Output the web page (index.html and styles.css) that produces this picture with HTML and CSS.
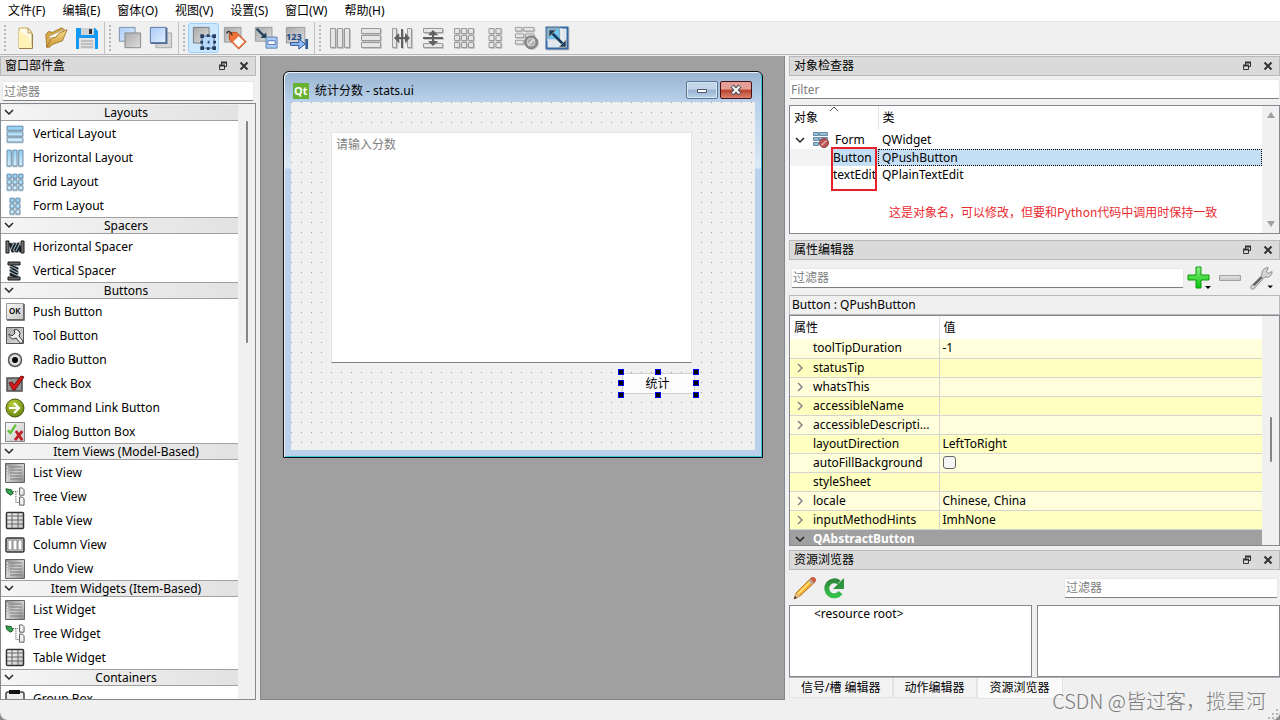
FILE: index.html
```html
<!DOCTYPE html>
<html lang="zh-CN">
<head>
<meta charset="utf-8">
<title>Qt Designer</title>
<link rel="stylesheet" href="styles.css">
</head>
<body>
<svg class="defs" aria-hidden="true">
  <defs>
    <linearGradient id="gBlue" x1="0" y1="0" x2="0" y2="1"><stop offset="0" stop-color="#8fcdf3"/><stop offset="1" stop-color="#d8f0fd"/></linearGradient>
    <linearGradient id="gSheet" x1="0" y1="0" x2="1" y2="1"><stop offset="0" stop-color="#a9cbf8"/><stop offset="1" stop-color="#e2effe"/></linearGradient>
    <linearGradient id="gGray" x1="0" y1="0" x2="1" y2="1"><stop offset="0" stop-color="#a9a9a9"/><stop offset="1" stop-color="#dedede"/></linearGradient>
    <linearGradient id="gBtn" x1="0" y1="0" x2="1" y2="1"><stop offset="0" stop-color="#fafafa"/><stop offset="1" stop-color="#c4c4c4"/></linearGradient>
    <linearGradient id="gGold" x1="0" y1="0" x2="0" y2="1"><stop offset="0" stop-color="#f8dc8c"/><stop offset="1" stop-color="#c99633"/></linearGradient>
    <linearGradient id="gGreen" x1="0" y1="0" x2="0" y2="1"><stop offset="0" stop-color="#8ff08a"/><stop offset="1" stop-color="#06c406"/></linearGradient>
    <linearGradient id="gList" x1="0" y1="0" x2="1" y2="1"><stop offset="0" stop-color="#8a8a8a"/><stop offset="0.5" stop-color="#d0d0d0"/><stop offset="1" stop-color="#8a8a8a"/></linearGradient>
    <linearGradient id="gReload" x1="0" y1="0" x2="0" y2="1"><stop offset="0" stop-color="#2f8a3c"/><stop offset="1" stop-color="#35c04a"/></linearGradient>
    <radialGradient id="gOlive" cx="0.4" cy="0.3" r="0.8"><stop offset="0" stop-color="#b9cf3a"/><stop offset="1" stop-color="#5f7d08"/></radialGradient>

    <symbol id="restore" viewBox="0 0 10 10"><path d="M3.500 4V1.500h5v4H6.500M1.500 4.500h5v4h-5z" fill="none" stroke="#333"/><path d="M1 4.500h6M3 1.500h6" stroke="#333" stroke-width="2"/></symbol>
    <symbol id="close" viewBox="0 0 10 10"><path d="M1.500 1.500l7 7M8.500 1.500l-7 7" stroke="#333" stroke-width="2"/></symbol>
    <symbol id="down" viewBox="0 0 10 10"><path d="M1 3l4 4 4-4" fill="none" stroke="#222" stroke-width="1.500"/></symbol>
    <symbol id="right" viewBox="0 0 10 10"><path d="M3 1l4 4-4 4" fill="none" stroke="#858585" stroke-width="1.500"/></symbol>

    <symbol id="new" viewBox="0 0 24 24"><path d="M6 2h9l4 5v15H6z" fill="#fffbe6" stroke="#c8a955"/><path d="M6 22V5l10 6 3 11z" fill="#fff3b8"/><path d="M15 2l4 5h-4z" fill="#fff" stroke="#b99743"/><path d="M6 22.500h13.500V8" fill="none" stroke="#9a8047"/></symbol>
    <symbol id="open" viewBox="0 0 26 24"><path d="M2 8l3-3 4 1 10-5 3 2-2 6L6 19l-3 3z" fill="#d9aa46" stroke="#9b7426"/><path d="M6 10L21 3l-2 9L7 18z" fill="#fff" stroke="#b7a77f"/><path d="M3 22l5-10 5-1 3-4 9-4-5 12-11 4-3 3z" fill="url(#gGold)" stroke="#a47a26"/></symbol>
    <symbol id="save" viewBox="0 0 24 24"><path d="M1 2h19l3 3v18H1z" fill="#1499f5"/><path d="M6 2h13v7H6z" fill="#cfd3d6"/><path d="M14 3h3v5h-3z" fill="#333"/><path d="M4 12h16v11H4z" fill="#e2e2e2"/><path d="M6 15h12M6 18h12M6 21h12" stroke="#999"/></symbol>
    <symbol id="back" viewBox="0 0 26 26"><path d="M1.500 1.500h17v15h-17z" fill="url(#gSheet)" stroke="#7c8da8"/><path d="M7.500 7.500h17v16h-17z" fill="url(#gGray)" stroke="#858585"/></symbol>
    <symbol id="front" viewBox="0 0 26 26"><path d="M7.500 7.500h17v16h-17z" fill="#d6d6d6" stroke="#a5a5a5"/><path d="M1.500 1.500h17v17h-17z" fill="url(#gSheet)" stroke="#54719f"/><path d="M2 18.500h17V2" fill="none" stroke="#536b91" stroke-width="2"/></symbol>
    <symbol id="widgets" viewBox="0 0 26 26"><path d="M1.500 1.500h17v17h-17z" fill="url(#gGray)" stroke="#777"/><path d="M11 11h13v13H11z" fill="#b8d9fb" stroke="#4e6f9e"/><path d="M9 9h4v4H9zm7 0h3v3h-3zm6 0h4v4h-4zM9 16h3v3H9zm14 0h3v3h-3zM9 22h4v4H9zm7 1h3v3h-3zm6-1h4v4h-4z" fill="#273d60"/><path d="M17 16h2v3h-2z" fill="#35527c"/></symbol>
    <symbol id="signals" viewBox="0 0 26 26"><path d="M1.500 1.500h18v16h-18z" fill="url(#gGray)" stroke="#999"/><path d="M7 7h8l10 10-8 8L7 15z" fill="#ef7238" stroke="#bd4b22"/><path d="M17 11l6 6-6 6-6-6z" fill="#fff"/><path d="M4 8c2-4 4-2 6 2" fill="none" stroke="#333" stroke-width="1.500"/></symbol>
    <symbol id="buddy" viewBox="0 0 26 26"><path d="M1.500 1.500h18v15h-18z" fill="url(#gGray)" stroke="#999"/><path d="M3 3l8 8" stroke="#24435c" stroke-width="2.500"/><path d="M14 13H7l6-6z" fill="#24435c"/><path d="M13 12h12v12H13z" fill="#a8cbfa" stroke="#5b7ba8"/><path d="M15 16h8v4h-8z" fill="#fff" stroke="#4f72ac"/></symbol>
    <symbol id="taborder" viewBox="0 0 26 26"><path d="M1.500 1.500h20v17h-20z" fill="url(#gGray)" stroke="#999"/><text x="1" y="15" class="tab-digits">123</text><path d="M6 18h9v-4l7 5.500-7 5.500v-4H6z" fill="#8ebcff" stroke="#244f86"/><path d="M22 14h3v11h-3z" fill="#345f9a"/></symbol>
    <symbol id="hlay" viewBox="0 0 24 24"><path d="M2.500 2.500h5v19h-5zm7 0h5v19h-5zm7 0h5v19h-5z"/></symbol>
    <symbol id="vlay" viewBox="0 0 24 24"><path d="M2.500 2.500h19v5h-19zm0 7h19v5h-19zm0 7h19v5h-19z"/></symbol>
    <symbol id="grid" viewBox="0 0 24 24"><path d="M2.500 2.500h5v5h-5zm7 0h5v5h-5zm7 0h5v5h-5zm-14 7h5v5h-5zm7 0h5v5h-5zm7 0h5v5h-5zm-14 7h5v5h-5zm7 0h5v5h-5zm7 0h5v5h-5z"/></symbol>
    <symbol id="formlay" viewBox="0 0 24 24"><path d="M6 2.500h5v5H6zm7 0h5v5h-5zm-7 7h5v5H6zm7 0h5v5h-5zm-7 7h5v5H6zm7 0h5v5h-5z"/></symbol>
    <symbol id="hsplit" viewBox="0 0 24 24"><path d="M2.500 2.500h4v19h-4zm15 0h4v19h-4z"/><path d="M11 3h2v19h-2z" class="ink"/><path d="M4 12l5-5v4h6V7l5 5-5 5v-4H9v4z" class="ink"/></symbol>
    <symbol id="vsplit" viewBox="0 0 24 24"><path d="M2.500 2.500h19v4h-19zm0 15h19v4h-19z"/><path d="M2 11h20v2H2z" class="ink"/><path d="M12 4l5 5h-4v6h4l-5 5-5-5h4V9H7z" class="ink"/></symbol>
    <symbol id="breaklay" viewBox="0 0 24 24"><path d="M1.500 1.500h7v4h-7zm9 0h11v4h-11zm-9 7h9v4h-9zm11 0h9v4h-9zm-11 7h9v4h-9z"/></symbol>
    <symbol id="nogray" viewBox="0 0 14 14"><circle cx="7" cy="7" r="6.500" fill="#8c8c8c" stroke="#777"/><circle cx="7" cy="7" r="4" fill="#aaa" stroke="#d0d0d0"/><path d="M4 10l6-6" stroke="#ddd" stroke-width="2"/></symbol>
    <symbol id="adjust" viewBox="0 0 24 24"><path d="M1.500 1.500h21v21h-21z" fill="#dfe7ef" stroke="#356aa6" stroke-width="2"/><path d="M2 2h13v12H2z" fill="#71c5f5"/><path d="M16 2v12H2" fill="none" stroke="#fff"/><path d="M6 6l13 13" stroke="#173b5b" stroke-width="2.500"/><path d="M4 4h7l-7 7zM21 21h-7l7-7z" fill="#173b5b"/></symbol>

    <symbol id="hspring" viewBox="0 0 20 20"><path d="M5 6l3 9 1-9 3 9 1-9 3 9" fill="none" stroke="#1b2227" stroke-width="3"/><path d="M5 14l4-8M8 14l4-8M11 14l4-8" fill="none" stroke="#a9c3cf"/><path d="M1 4h3v12H1zm15 0h3v12h-3z" fill="#777" stroke="#161616"/></symbol>
    <symbol id="vspring" viewBox="0 0 20 20"><path d="M5 5l8 3-8 1 8 3-8 1 8 3" fill="none" stroke="#1b2227" stroke-width="3"/><path d="M5 5l8 4M5 8l8 4M5 11l8 4" fill="none" stroke="#a9c3cf"/><path d="M3 1h12v3H3zm0 15h12v3H3z" fill="#666" stroke="#161616"/></symbol>
    <symbol id="push" viewBox="0 0 20 20"><path d="M1.500 1.500h17v16h-17z" fill="url(#gBtn)" stroke="#999"/><path d="M2 18h17V2" fill="none" stroke="#555" stroke-width="1.500"/><text x="4" y="12" class="ok-text">OK</text></symbol>
    <symbol id="tool" viewBox="0 0 20 20"><path d="M1.500 1.500h17v16h-17z" fill="url(#gGray)" stroke="#555"/><path d="M9 4a4 4 0 0 1 5 6l4 5-2 3-5-6c-3 2-7 0-7-4l3 2 3-3z" fill="#eee" stroke="#333"/></symbol>
    <symbol id="radio" viewBox="0 0 20 20"><circle cx="10" cy="10" r="6.500" fill="#ddd" stroke="#555" stroke-width="1.500"/><circle cx="10" cy="10" r="3" fill="#080808"/></symbol>
    <symbol id="check" viewBox="0 0 20 20"><path d="M2 4h15v13H2z" fill="#929292" stroke="#4d4d4d" stroke-width="1.500"/><path d="M4 9l3-1 2 3 7-9 3 1-9 13H8z" fill="#d41818" stroke="#771010"/></symbol>
    <symbol id="command" viewBox="0 0 20 20"><circle cx="10" cy="10" r="9" fill="url(#gOlive)" stroke="#465908"/><path d="M4 10h10M9 5l5 5-5 5" fill="none" stroke="#fff" stroke-width="2.200"/></symbol>
    <symbol id="dialogbox" viewBox="0 0 22 22"><path d="M.500.500h21v21H.500z" fill="url(#gBtn)" stroke="#777"/><path d="M3 9l3 3 6-9" fill="none" stroke="#64bd3b" stroke-width="2.500"/><path d="M12 10l7 10m0-10l-8 10" stroke="#bf1d23" stroke-width="3"/></symbol>
    <symbol id="list" viewBox="0 0 20 20"><path d="M.500.500h19v19H.500z" fill="url(#gList)" stroke="#666"/><path d="M5 4h12M5 7h12M5 10h12M5 13h12M5 16h12" stroke="#777"/><path d="M2 4h1M2 7h1M2 10h1M2 13h1M2 16h1" stroke="#ddd" stroke-width="2"/></symbol>
    <symbol id="tree" viewBox="0 0 22 22"><path d="M1 2l6 1 2 4-3 2-4-3z" fill="#32a44b" stroke="#154d22"/><path d="M9 5h6M12 6v11h4" fill="none" stroke="#333" stroke-dasharray="1 1"/><path d="M16 1h3l2 2v6h-5zm0 10h3l2 2v7h-5z" fill="#eee" stroke="#555"/></symbol>
    <symbol id="table" viewBox="0 0 20 20"><rect x="1.500" y="1.500" width="17" height="16" rx="1" fill="url(#gBtn)" stroke="#333" stroke-width="1.500"/><path d="M2 5h16M2 9h16M2 13h16M7 2v15M13 2v15" stroke="#666"/></symbol>
    <symbol id="column" viewBox="0 0 20 20"><rect x="1" y="3" width="18" height="14" rx="1.500" fill="#ccc" stroke="#333" stroke-width="1.500"/><path d="M3 5h4v10H3zm5 0h4v10H8zm5 0h4v10h-4z" fill="#fff" stroke="#888"/></symbol>
    <symbol id="groupbox" viewBox="0 0 20 20"><rect x="1" y="3" width="18" height="16" rx="2" fill="#eee" stroke="#444" stroke-width="1.500"/><path d="M4 1h11v4H4z" fill="#111"/></symbol>

    <symbol id="qt" viewBox="0 0 16 16"><rect width="16" height="16" fill="#67b230"/><text x="1" y="12" class="qt-text">Qt</text></symbol>
    <symbol id="formicon" viewBox="0 0 16 16"><path d="M.500.500h5v3h-5zm6 0h8v3h-8zm-6 5h5v3h-5zm6 0h8v3h-8zm-6 5h5v3h-5z" fill="#9ac0d7" stroke="#668ba4"/><circle cx="11" cy="11" r="4.500" fill="#b85757" stroke="#8e3a3a"/><path d="M8.500 13.500l5-5" stroke="#eab0b0" stroke-width="1.500"/></symbol>
    <symbol id="plus" viewBox="0 0 24 24"><path d="M9 1h5v8h8v5h-8v8H9v-8H1V9h8z" fill="url(#gGreen)" stroke="#089b08"/><path d="M18 20h6l-3 3z" fill="#000"/></symbol>
    <symbol id="minus" viewBox="0 0 24 24"><path d="M1.500 9.500h21v5h-21z" fill="#ccc" stroke="#a3a3a3"/><path d="M3 11h18" stroke="#eee"/></symbol>
    <symbol id="wrench" viewBox="0 0 26 26"><path d="M2 22L14 10c-1-5 3-9 7-8l-2 4 2 2 4-2c0 5-4 7-8 6L5 25c-2 1-4-1-3-3z" fill="#d3d3d3" stroke="#888"/><path d="M5 21l9-9" stroke="#555" stroke-width="2"/><path d="M20 21h6l-3 3z" fill="#000"/></symbol>
    <symbol id="pencil" viewBox="0 0 24 24"><path d="M1 23l2-6L18 2l4 4L7 20z" fill="#f3aa2f" stroke="#b97722"/><path d="M5 18L19 4" stroke="#ffdc78" stroke-width="2"/><path d="M17 3l2-2h2l2 2v2l-2 2z" fill="#cb6047"/><path d="M16 4l4 4" stroke="#aaa" stroke-width="2"/><path d="M1 23l2-6 4 3z" fill="#e0be8b"/><path d="M1 23l1-3 2 2z" fill="#333"/></symbol>
    <symbol id="reload" viewBox="0 0 22 22"><path d="M17.500 15.500A7.500 7.500 0 1 1 16 5.500" fill="none" stroke="url(#gReload)" stroke-width="5"/><path d="M21 1v11H10l4-4z" fill="#2f9440"/></symbol>
  </defs>
</svg>

<div class="app">
  <nav class="menubar">
    <button>文件(F)</button><button>编辑(E)</button><button>窗体(O)</button><button>视图(V)</button><button>设置(S)</button><button>窗口(W)</button><button>帮助(H)</button>
  </nav>

  <div class="toolbar">
    <div class="tool-group">
      <button aria-label="新建"><svg><use href="#new"/></svg></button>
      <button aria-label="打开"><svg><use href="#open"/></svg></button>
      <button aria-label="保存"><svg><use href="#save"/></svg></button>
    </div>
    <div class="tool-group">
      <button aria-label="置后"><svg><use href="#back"/></svg></button>
      <button aria-label="置前"><svg><use href="#front"/></svg></button>
    </div>
    <div class="tool-group">
      <button class="active" aria-label="编辑控件"><svg><use href="#widgets"/></svg></button>
      <button aria-label="编辑信号"><svg><use href="#signals"/></svg></button>
      <button aria-label="编辑伙伴"><svg><use href="#buddy"/></svg></button>
      <button aria-label="编辑顺序"><svg><use href="#taborder"/></svg></button>
    </div>
    <div class="tool-group lay-gray">
      <button aria-label="水平布局"><svg><use href="#hlay"/></svg></button>
      <button aria-label="垂直布局"><svg><use href="#vlay"/></svg></button>
      <button aria-label="水平分裂"><svg><use href="#hsplit"/></svg></button>
      <button aria-label="垂直分裂"><svg><use href="#vsplit"/></svg></button>
      <button aria-label="栅格布局"><svg><use href="#grid"/></svg></button>
      <button aria-label="表单布局"><svg><use href="#formlay"/></svg></button>
      <button aria-label="打破布局"><svg viewBox="0 0 26 26"><use href="#breaklay" width="24" height="24"/><use href="#nogray" x="11" y="10" width="15" height="15"/></svg></button>
      <button aria-label="调整大小"><svg><use href="#adjust"/></svg></button>
    </div>
  </div>

  <main class="workspace">
    <section class="dock left">
      <header class="dock-title"><h2>窗口部件盒</h2><button aria-label="浮动"><svg><use href="#restore"/></svg></button><button aria-label="关闭"><svg><use href="#close"/></svg></button></header>
      <input class="filter" type="text" placeholder="过滤器" aria-label="过滤部件">
      <div class="widget-box">
        <div class="widget-list">
          <h3><svg><use href="#down"/></svg>Layouts</h3>
          <ul class="lay-blue">
            <li><svg><use href="#vlay"/></svg>Vertical Layout</li>
            <li><svg><use href="#hlay"/></svg>Horizontal Layout</li>
            <li><svg><use href="#grid"/></svg>Grid Layout</li>
            <li><svg><use href="#formlay"/></svg>Form Layout</li>
          </ul>
          <h3><svg><use href="#down"/></svg>Spacers</h3>
          <ul>
            <li><svg><use href="#hspring"/></svg>Horizontal Spacer</li>
            <li><svg><use href="#vspring"/></svg>Vertical Spacer</li>
          </ul>
          <h3><svg><use href="#down"/></svg>Buttons</h3>
          <ul>
            <li><svg><use href="#push"/></svg>Push Button</li>
            <li><svg><use href="#tool"/></svg>Tool Button</li>
            <li><svg><use href="#radio"/></svg>Radio Button</li>
            <li><svg><use href="#check"/></svg>Check Box</li>
            <li><svg><use href="#command"/></svg>Command Link Button</li>
            <li><svg><use href="#dialogbox"/></svg>Dialog Button Box</li>
          </ul>
          <h3><svg><use href="#down"/></svg>Item Views (Model-Based)</h3>
          <ul>
            <li><svg><use href="#list"/></svg>List View</li>
            <li><svg><use href="#tree"/></svg>Tree View</li>
            <li><svg><use href="#table"/></svg>Table View</li>
            <li><svg><use href="#column"/></svg>Column View</li>
            <li><svg><use href="#list"/></svg>Undo View</li>
          </ul>
          <h3><svg><use href="#down"/></svg>Item Widgets (Item-Based)</h3>
          <ul>
            <li><svg><use href="#list"/></svg>List Widget</li>
            <li><svg><use href="#tree"/></svg>Tree Widget</li>
            <li><svg><use href="#table"/></svg>Table Widget</li>
          </ul>
          <h3><svg><use href="#down"/></svg>Containers</h3>
          <ul>
            <li><svg><use href="#groupbox"/></svg>Group Box</li>
          </ul>
        </div>
        <div class="scroll"><i class="thumb"></i></div>
      </div>
    </section>

    <section class="canvas">
      <div class="form-window">
        <header class="form-title">
          <svg class="qt-logo"><use href="#qt"/></svg><span>统计分数 - stats.ui</span>
          <button class="win-min" aria-label="最小化"><svg viewBox="0 0 12 12"><path d="M1.500 5.500h9v3h-9z" fill="#fff" stroke="#4f5868"/></svg></button>
          <button class="win-close" aria-label="关闭"><svg viewBox="0 0 12 12"><path d="M2 2l8 8M10 2l-8 8" stroke="#454b5b" stroke-width="4"/><path d="M2.500 2.500l7 7M9.500 2.500l-7 7" stroke="#fff" stroke-width="2"/></svg></button>
        </header>
        <div class="form-body">
          <textarea placeholder="请输入分数" aria-label="分数"></textarea>
          <div class="selected-widget">
            <button>统计</button>
            <i class="nw"></i><i class="n"></i><i class="ne"></i><i class="w"></i><i class="e"></i><i class="sw"></i><i class="s"></i><i class="se"></i>
          </div>
        </div>
      </div>
    </section>

    <div class="dock right">
      <section class="inspector">
        <header class="dock-title"><h2>对象检查器</h2><button aria-label="浮动"><svg><use href="#restore"/></svg></button><button aria-label="关闭"><svg><use href="#close"/></svg></button></header>
        <input class="filter" type="text" placeholder="Filter" aria-label="Filter">
        <div class="panel objects">
          <div class="panel-main">
            <table>
              <thead><tr><th>对象<svg class="sort" viewBox="0 0 10 6"><path d="M1 5l4-4 4 4" fill="none" stroke="#555"/></svg></th><th>类</th></tr></thead>
              <tbody>
                <tr class="root"><td><svg class="arrow"><use href="#down"/></svg><svg class="form-icon"><use href="#formicon"/></svg>Form</td><td>QWidget</td></tr>
                <tr class="selected"><td><span>Button</span></td><td>QPushButton</td></tr>
                <tr class="child"><td><span>textEdit</span></td><td>QPlainTextEdit</td></tr>
              </tbody>
            </table>
            <div class="red-frame"></div>
            <p class="note">这是对象名，可以修改，但要和Python代码中调用时保持一致</p>
          </div>
          <div class="scroll ends"><svg viewBox="0 0 10 8"><path d="M5 1l4 6H1z"/></svg><svg viewBox="0 0 10 8"><path d="M5 7l4-6H1z"/></svg></div>
        </div>
      </section>

      <section class="properties">
        <header class="dock-title"><h2>属性编辑器</h2><button aria-label="浮动"><svg><use href="#restore"/></svg></button><button aria-label="关闭"><svg><use href="#close"/></svg></button></header>
        <div class="prop-tools">
          <input class="filter" type="text" placeholder="过滤器" aria-label="过滤属性">
          <button aria-label="添加"><svg><use href="#plus"/></svg></button>
          <button aria-label="删除"><svg><use href="#minus"/></svg></button>
          <button aria-label="配置"><svg><use href="#wrench"/></svg></button>
        </div>
        <div class="prop-object">Button : QPushButton</div>
        <div class="panel prop-panel">
          <div class="panel-main">
            <table>
              <thead><tr><th>属性</th><th>值</th></tr></thead>
              <tbody>
                <tr><td>toolTipDuration</td><td>-1</td></tr>
                <tr><td><svg><use href="#right"/></svg>statusTip</td><td></td></tr>
                <tr><td><svg><use href="#right"/></svg>whatsThis</td><td></td></tr>
                <tr><td><svg><use href="#right"/></svg>accessibleName</td><td></td></tr>
                <tr><td><svg><use href="#right"/></svg>accessibleDescripti...</td><td></td></tr>
                <tr><td>layoutDirection</td><td>LeftToRight</td></tr>
                <tr><td><label for="autofill">autoFillBackground</label></td><td><input type="checkbox" id="autofill"></td></tr>
                <tr><td>styleSheet</td><td></td></tr>
                <tr><td><svg><use href="#right"/></svg>locale</td><td>Chinese, China</td></tr>
                <tr><td><svg><use href="#right"/></svg>inputMethodHints</td><td>ImhNone</td></tr>
                <tr class="group"><td colspan="2"><svg><use href="#down"/></svg>QAbstractButton</td></tr>
              </tbody>
            </table>
          </div>
          <div class="scroll"><i class="thumb"></i></div>
        </div>
      </section>

      <section class="resources">
        <header class="dock-title"><h2>资源浏览器</h2><button aria-label="浮动"><svg><use href="#restore"/></svg></button><button aria-label="关闭"><svg><use href="#close"/></svg></button></header>
        <div class="res-tools">
          <button aria-label="编辑资源"><svg><use href="#pencil"/></svg></button>
          <button aria-label="重新加载"><svg><use href="#reload"/></svg></button>
          <input class="filter" type="text" placeholder="过滤器" aria-label="过滤资源">
        </div>
        <div class="res-split"><div class="panel">&lt;resource root&gt;</div><div class="panel"></div></div>
        <div class="tabs"><button>信号/槽 编辑器</button><button>动作编辑器</button><button class="current">资源浏览器</button></div>
      </section>
    </div>
  </main>
  <footer class="statusbar"></footer>
  <div class="watermark">CSDN @皆过客，揽星河</div>
  <svg class="grip" viewBox="0 0 10 10"><path d="M8 0h2v2H8zM4 4h2v2H4zm4 0h2v2H8zM0 8h2v2H0zm4 0h2v2H4zm4 0h2v2H8z" fill="#b5b5b5"/></svg>
</div>
</body>
</html>
```

FILE: styles.css
```css
* { box-sizing: border-box; }
html, body { height: 100%; margin: 0; }
body {
  background: #8a8a8a;
  color: #000;
  font-family: "Noto Sans", "Noto Sans CJK SC", sans-serif;
  font-size: 12px;
  line-height: 16px;
  overflow: hidden;
}
button, input, textarea { font: inherit; color: inherit; margin: 0; }
button { border: 0; background: none; padding: 0; }
h2, h3, ul, p { margin: 0; padding: 0; font-size: inherit; font-weight: 400; list-style: none; }
svg { display: block; flex: none; }
.defs { position: absolute; width: 0; height: 0; }
table { width: 100%; border-collapse: collapse; table-layout: fixed; }
th, td { padding: 0; font-weight: 400; text-align: left; white-space: nowrap; }

.app {
  position: relative;
  display: flex;
  flex-direction: column;
  height: 100vh;
  background: #f0f0f0;
  border-radius: 0 0 8px 8px;
  overflow: hidden;
}

.menubar { display: flex; gap: 17px; padding: 0 8px; height: 21px; background: #fff; flex: none; }

.toolbar { display: flex; height: 34px; flex: none; border-top: 1px solid #e6e6e6; border-bottom: 1px solid #b5b5b8; }
.tool-group {
  position: relative;
  display: flex;
  align-items: center;
  padding: 0 2px 0 9px;
  border-right: 1px solid #c2c2c2;
}
.tool-group:last-child { border-right: 0; }
.tool-group::before {
  content: "";
  position: absolute;
  left: 4px;
  top: 3px;
  bottom: 3px;
  width: 2px;
  background: repeating-linear-gradient(#b8b8b8 0 2px, transparent 2px 4px);
}
.tool-group button { width: 31px; height: 30px; display: grid; place-items: center; border-radius: 3px; }
.tool-group svg { width: 24px; height: 24px; }
.tool-group .active { background: #cce8ff; border: 1px solid #99d1ff; }
.lay-gray { fill: #e6e6e6; stroke: #999; }
.lay-gray svg { filter: drop-shadow(1px 1px 0 #c4c4c4); }
.ink { fill: #606060; stroke: none; }
.tab-digits { font-size: 10px; font-weight: 700; fill: #1d4c86; }
.ok-text { font-size: 8px; font-weight: 600; }
.qt-text { font-size: 11px; font-weight: 700; fill: #fff; }

.workspace { flex: 1; min-height: 0; display: flex; gap: 4px; padding-top: 1px; }
.dock { display: flex; flex-direction: column; min-height: 0; }
.left { width: 256px; flex: none; }
.right { flex: 0 0 491px; }
.dock-title {
  display: flex;
  align-items: center;
  gap: 10px;
  height: 20px;
  padding: 0 5px 0 4px;
  background: #dadada;
  border: 1px solid #b9b9b9;
  flex: none;
}
.dock-title h2 { flex: 1; }
.dock-title button { width: 11px; height: 10px; }
.dock-title svg { width: 10px; height: 10px; }

.filter {
  height: 20px;
  min-width: 0;
  padding: 0 1px;
  background: #fff;
  border: 1px solid #e8e8e8;
  border-bottom-color: #7f7f7f;
  border-radius: 2px;
  outline: 0;
}
.filter::placeholder, textarea::placeholder { color: #808080; opacity: 1; }
.left .filter { margin: 5px 2px 2px; }

.widget-box { flex: 1; min-height: 0; display: flex; border: 1px solid #828790; background: #fff; }
.widget-list { flex: 1; overflow: hidden; }
.widget-list h3 {
  position: relative;
  height: 17px;
  text-align: center;
  padding-left: 13px;
  font-size: 12px;
  line-height: 15px;
  background: linear-gradient(90deg, #f5f5f5, #e2e2e2);
  border: solid #a0a0a0;
  border-width: 1px 0;
}
.widget-list h3:first-child { border-top-color: #eee; }
.widget-list h3 svg { position: absolute; left: 3px; top: 2px; width: 10px; height: 10px; }
.widget-list li { display: flex; align-items: center; gap: 8px; height: 24px; padding: 1px 0 0 4px; line-height: 17px; white-space: nowrap; }
.widget-list li svg { width: 20px; height: 20px; }
.lay-blue { fill: url(#gBlue); stroke: #64869f; }
.lay-blue svg { filter: drop-shadow(0 1px 0 #b4c4d0); }
.scroll { width: 17px; flex: none; background: #f0f0f0; display: flex; flex-direction: column; align-items: center; }
.thumb { width: 2px; background: #858585; border-radius: 1px; }
.left .thumb { height: 222px; margin-top: 17px; }

.canvas { position: relative; flex: 1; background: #a0a0a0; border: solid #828790; border-width: 0 1px 1px; }
.form-window {
  position: absolute;
  left: 22px;
  top: 15px;
  width: 480px;
  height: 387px;
  display: flex;
  flex-direction: column;
  padding: 0 6px 6px;
  background: linear-gradient(#99b4d1 0, #b9d1ea 30px, #dce8f5 96px, #b9d1ea 97px);
  border: 1px solid #111;
  border-radius: 6px 6px 0 0;
  box-shadow: inset 1px 1px #e9f2fb, inset -1px -1px #35c5dc;
}
.form-title { display: flex; align-items: center; height: 30px; padding: 7px 4px 0 3px; flex: none; }
.qt-logo { width: 16px; height: 16px; margin-right: 6px; }
.form-title span { flex: 1; }
.form-title button { display: grid; place-items: center; width: 32px; height: 18px; margin: 0 0 2px 2px; border-radius: 2px; border: 1px solid #5e7795; }
.form-title button svg { width: 12px; height: 12px; }
.win-min { background: linear-gradient(#c3d5e9 45%, #98b3d0 50%, #bbd3ec); box-shadow: inset 0 0 0 1px #d8e5f2; }
.form-title .win-close { border-color: #4a101a; background: linear-gradient(#e4a097 45%, #b93e28 50%, #d88470); }
.form-body {
  position: relative;
  flex: 1;
  margin: 0 1px 1px;
  background:
    linear-gradient(90deg, transparent 1px, #f0f0f0 1px) 0 0 / 10px 10px,
    linear-gradient(#a0a0a0 1px, #f0f0f0 1px) 0 0 / 10px 10px;
}
.form-body textarea {
  position: absolute;
  left: 40px;
  top: 30px;
  width: 361px;
  height: 231px;
  padding: 4px;
  resize: none;
  background: #fff;
  border: 1px solid #e4e4e4;
  border-bottom-color: #7f7f7f;
  outline: 0;
}
.selected-widget { position: absolute; left: 330px; top: 270px; width: 75px; height: 23px; }
.selected-widget button { position: absolute; inset: 1px; padding-right: 2px; background: #fdfdfd; border: 1px solid #d0d0d0; border-radius: 2px; }
.selected-widget i { position: absolute; width: 6px; height: 6px; margin: -3px; background: #000; border: 1px solid #00f; }
.selected-widget .nw { left: 0; top: 0; }
.selected-widget .n { left: 49%; top: 0; }
.selected-widget .ne { left: 100%; top: 0; }
.selected-widget .w { left: 0; top: 48%; }
.selected-widget .e { left: 100%; top: 48%; }
.selected-widget .sw { left: 0; top: 100%; }
.selected-widget .s { left: 49%; top: 100%; }
.selected-widget .se { left: 100%; top: 100%; }

.panel { display: flex; background: #fff; border: 1px solid #828790; min-height: 0; }
.panel-main { position: relative; flex: 1; overflow: hidden; }
.inspector, .properties, .resources { display: flex; flex-direction: column; }
.objects { height: 129px; margin: 6px 0; }
.inspector .filter { margin-top: 3px; }
.objects th:first-child { width: 88px; border-right: 1px solid #e2e2e2; padding-left: 4px; }
.objects th { position: relative; height: 24px; padding-left: 4px; }
.sort { position: absolute; left: 39px; top: 0; width: 10px; height: 6px; }
.objects td { height: 17px; line-height: 15px; padding: 0 0 0 4px; }
.objects td:first-child { padding-left: 42px; overflow: hidden; }
.objects .root td { height: 19px; }
.objects .root td:first-child { display: flex; align-items: center; padding-left: 5px; }
.arrow { width: 10px; height: 10px; margin-right: 8px; }
.form-icon { width: 16px; height: 16px; margin-right: 6px; }
.objects .selected td:first-child { background: linear-gradient(90deg, #f3f3f3 42px, #c4dff5 42px); }
.objects .selected td:last-child { background: #c4dff5; outline: 1px dotted #000; outline-offset: -1px; }
.objects td span { padding-left: 1px; }
.red-frame { position: absolute; left: 41px; top: 41px; width: 46px; height: 44px; border: 2px solid #e8202a; }
.note { position: absolute; left: 99px; top: 98px; color: #ea2a31; font-family: "Noto Sans CJK SC", sans-serif; white-space: nowrap; }
.ends { justify-content: space-between; padding: 5px 0; fill: #a0a0a0; }
.ends svg { width: 10px; height: 8px; }

.prop-tools { display: flex; align-items: center; height: 35px; padding-left: 2px; }
.prop-tools .filter { flex: 1; margin-right: 3px; }
.prop-tools button { width: 31px; height: 26px; }
.prop-tools button svg { width: 24px; height: 24px; }
.prop-object { height: 20px; padding: 0 2px; line-height: 18px; border: 1px solid #b9b9b9; }
.prop-panel { height: 231px; }
.prop-panel th { height: 23px; padding-left: 4px; }
.prop-panel th:first-child { width: 149px; border-right: 1px solid #e2e2e2; }
.prop-panel td { position: relative; height: 19px; line-height: 18px; padding-left: 3px; border-bottom: 1px solid #d4d4d4; background: #ffffdc; }
.prop-panel tr:nth-child(even) td { background: #ffffbf; }
.prop-panel td:first-child { padding-left: 23px; border-right: 1px solid #d4d4d4; }
.prop-panel td svg { position: absolute; left: 5px; top: 4px; width: 10px; height: 10px; }
.prop-panel .group td { background: #a0a0a0; color: #fff; font-weight: 700; border: 0; }
.prop-panel input { display: block; appearance: none; width: 13px; height: 13px; background: #f5f5f5; border: 1px solid #666; border-radius: 3px; }
.prop-panel .thumb { height: 45px; margin-top: 101px; }

.resources { margin-top: 4px; }
.res-tools { display: flex; align-items: center; gap: 6px; height: 35px; padding: 0 2px 0 4px; }
.res-tools button svg { width: 24px; height: 24px; }
.res-tools button:nth-child(2) svg { width: 22px; height: 22px; }
.res-tools .filter { width: 214px; margin-left: auto; }
.res-split { display: grid; grid-template-columns: 1fr 1fr; gap: 5px; height: 73px; border-bottom: 1px solid #b0b0b0; }
.res-split .panel { padding: 0 24px; }
.tabs { display: flex; height: 21px; }
.tabs button { height: 20px; padding: 0 11px; background: #f3f3f3; border: 1px solid #e4e4e4; border-top: 0; }
.tabs .current { height: 21px; background: #fafafa; padding: 0 12px; }

.statusbar { height: 20px; flex: none; }
.watermark { position: absolute; right: 14px; bottom: 5px; font-family: "Noto Sans CJK SC", sans-serif; font-size: 20px; line-height: 28px; font-weight: 300; color: #7c7c7c; }
.grip { position: absolute; right: 2px; bottom: 1px; width: 10px; height: 10px; }
```
